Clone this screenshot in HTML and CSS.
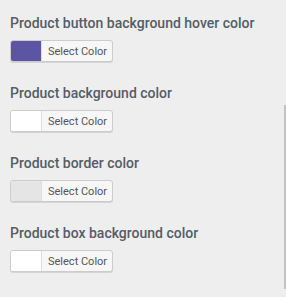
FILE: index.html
```html
<!DOCTYPE html>
<html lang="en">
<head>
    <meta charset="UTF-8">
    <meta name="viewport" content="width=device-width, initial-scale=1.0">
    <title>Product colors</title>
    <link rel="stylesheet" href="styles.css">
</head>
<body>
    <div class="panel">
        <div class="control">
            <span class="control-title">Product button background hover color</span>
            <button type="button" class="color-result">
                <span class="swatch" style="background-color: #5b55a4;"></span>
                <span class="color-text">Select Color</span>
            </button>
        </div>
        <div class="control">
            <span class="control-title">Product background color</span>
            <button type="button" class="color-result">
                <span class="swatch" style="background-color: #ffffff;"></span>
                <span class="color-text">Select Color</span>
            </button>
        </div>
        <div class="control">
            <span class="control-title">Product border color</span>
            <button type="button" class="color-result">
                <span class="swatch" style="background-color: #e5e5e5;"></span>
                <span class="color-text">Select Color</span>
            </button>
        </div>
        <div class="control">
            <span class="control-title">Product box background color</span>
            <button type="button" class="color-result">
                <span class="swatch" style="background-color: #ffffff;"></span>
                <span class="color-text">Select Color</span>
            </button>
        </div>
        <div class="scrollbar"></div>
    </div>
</body>
</html>
```

FILE: styles.css
```css
html, body {
    margin: 0;
    height: 100%;
}

body {
    background: #eeeeee;
    font-family: Roboto, "Liberation Sans", Arial, sans-serif;
    overflow: hidden;
}

.panel {
    position: relative;
    height: 100%;
    padding: 14px 10px 0 10px;
    box-sizing: border-box;
}

.control {
    margin-bottom: 22px;
}

.control-title {
    display: block;
    font-size: 14px;
    line-height: 18px;
    font-weight: 500;
    color: #555d66;
    margin-bottom: 8px;
}

.color-result {
    display: flex;
    align-items: stretch;
    height: 22px;
    padding: 0;
    margin: 0;
    border: 1px solid #cccccc;
    border-radius: 3px;
    background: #f7f7f7;
    box-shadow: 0 1px 0 #d4d4d4;
    overflow: hidden;
    font-family: inherit;
    cursor: pointer;
}

.swatch {
    width: 30px;
    border-right: 1px solid #dddddd;
}

.color-text {
    display: flex;
    align-items: center;
    padding: 0 5px 0 6px;
    font-size: 11px;
    color: #555555;
}

.scrollbar {
    position: absolute;
    right: 0;
    top: 105px;
    bottom: 8px;
    width: 2px;
    background: #c2c2c2;
}
```
